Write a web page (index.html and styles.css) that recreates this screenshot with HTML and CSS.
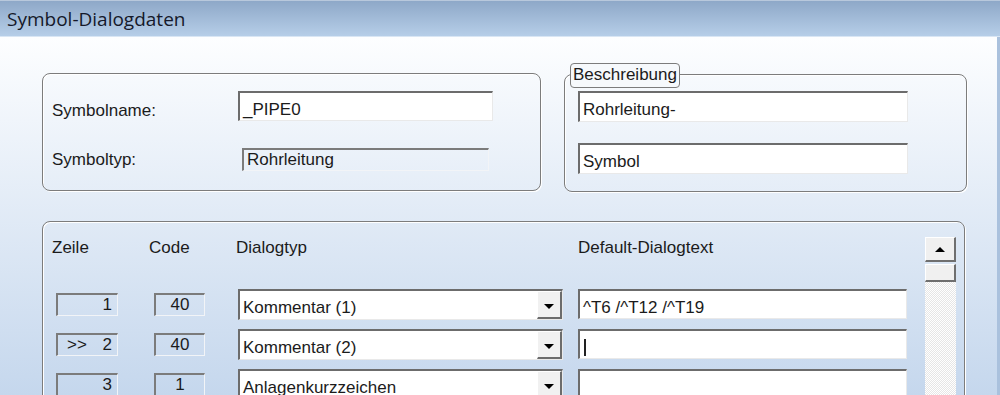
FILE: index.html
```html
<!DOCTYPE html>
<html lang="de">

<head>
    <meta charset="UTF-8">
    <title>Symbol-Dialogdaten</title>
    <link rel="stylesheet" href="styles.css">
</head>

<body>
    <div class="window">
        <div class="titlebar">Symbol-Dialogdaten</div>

        <div class="client">
            <div class="top-row">
                <div class="group group-symbol">
                    <div class="field-row">
                        <span class="label label-name">Symbolname:</span>
                        <div class="edit edit-name">_PIPE0</div>
                    </div>
                    <div class="field-row">
                        <span class="label">Symboltyp:</span>
                        <div class="static static-type">Rohrleitung</div>
                    </div>
                </div>

                <div class="group group-desc">
                    <span class="legend">Beschreibung</span>
                    <div class="edit edit-desc">Rohrleitung-</div>
                    <div class="edit edit-desc">Symbol</div>
                </div>
            </div>

            <div class="group group-lines">
                <div class="lines">
                    <div class="head">Zeile</div>
                    <div class="head">Code</div>
                    <div class="head">Dialogtyp</div>
                    <div class="head">Default-Dialogtext</div>

                    <div class="cell"><div class="static num-line">1</div></div>
                    <div class="cell"><div class="static num-code">40</div></div>
                    <div class="cell">
                        <div class="combo">
                            <span class="combo-text">Kommentar (1)</span>
                            <span class="combo-btn"><span class="arrow-down"></span></span>
                        </div>
                    </div>
                    <div class="cell"><div class="edit edit-text">^T6 /^T12 /^T19</div></div>

                    <div class="cell"><div class="static num-line"><span>&gt;&gt;</span>2</div></div>
                    <div class="cell"><div class="static num-code">40</div></div>
                    <div class="cell">
                        <div class="combo">
                            <span class="combo-text">Kommentar (2)</span>
                            <span class="combo-btn"><span class="arrow-down"></span></span>
                        </div>
                    </div>
                    <div class="cell"><div class="edit edit-text"><span class="caret"></span></div></div>

                    <div class="cell"><div class="static num-line">3</div></div>
                    <div class="cell"><div class="static num-code">1</div></div>
                    <div class="cell">
                        <div class="combo">
                            <span class="combo-text">Anlagenkurzzeichen</span>
                            <span class="combo-btn"><span class="arrow-down"></span></span>
                        </div>
                    </div>
                    <div class="cell"><div class="edit edit-text"></div></div>
                </div>

                <div class="scrollbar">
                    <div class="sb-btn"><span class="arrow-up"></span></div>
                    <div class="sb-thumb"></div>
                    <div class="sb-track"></div>
                </div>
            </div>
        </div>
    </div>
</body>

</html>
```

FILE: styles.css
```css
body {
    margin: 0;
    font-family: "Liberation Sans", Arial, sans-serif;
    font-size: 17px;
    color: #1b1b1b;
}

.window {
    width: 1000px;
    height: 395px;
    display: flex;
    flex-direction: column;
    overflow: hidden;
}

.titlebar {
    height: 37px;
    box-sizing: border-box;
    padding-left: 7px;
    line-height: 36px;
    font-family: "Open Sans", "Noto Sans", sans-serif;
    font-size: 19px;
    color: #15192a;
    background: linear-gradient(#8ea8c8, #b6cee8);
    border-top: 1px solid #b8c8dc;
    border-bottom: 1px solid #d9e6f4;
}

.client {
    flex: 1;
    overflow: hidden;
    padding: 36px 0 0 42px;
    background: linear-gradient(#fdfeff, #c5d7ed);
    border-right: 3px solid #aac1dd;
}

.top-row {
    display: flex;
    align-items: flex-start;
    gap: 23px;
}

.group {
    box-sizing: border-box;
    border: 1px solid #7c7c7c;
    border-radius: 8px;
    box-shadow: inset 1px 1px 0 #fff, 1px 1px 0 #fff;
}

/* Symbol name / type */
.group-symbol {
    width: 499px;
    height: 118px;
    padding: 17px 0 0 9px;
}

.field-row {
    display: flex;
    align-items: center;
}

.field-row + .field-row {
    margin-top: 27px;
}

.label {
    width: 186px;
    flex: none;
}

.label-name {
    padding-top: 10px;
}

.edit {
    box-sizing: border-box;
    height: 31px;
    padding: 7px 3px 0;
    line-height: 19px;
    background: #fff;
    border-top: 2px solid #6c6c6c;
    border-left: 2px solid #6c6c6c;
    border-right: 1px solid #e9e9e9;
    border-bottom: 1px solid #e9e9e9;
    white-space: nowrap;
}

.edit-name {
    width: 255px;
    height: 30px;
}

.static {
    box-sizing: border-box;
    height: 23px;
    line-height: 20px;
    padding: 0 3px;
    border-top: 2px solid #7b7b7b;
    border-left: 2px solid #7b7b7b;
    border-right: 1px solid #f2f4f7;
    border-bottom: 1px solid #f2f4f7;
}

.static-type {
    width: 247px;
    margin-left: 4px;
}

/* Beschreibung */
.group-desc {
    position: relative;
    width: 403px;
    height: 118px;
    margin-top: 1px;
    padding: 16px 0 0 13px;
}

.legend {
    position: absolute;
    top: -12px;
    left: 5px;
    height: 25px;
    box-sizing: border-box;
    padding: 0 2px;
    line-height: 22px;
    border: 1px solid #7c7c7c;
    border-radius: 4px;
    background: #f6f9fc;
}

.edit-desc {
    width: 330px;
}

.edit-desc + .edit-desc {
    margin-top: 21px;
}

/* Dialog lines */
.group-lines {
    width: 923px;
    height: 220px;
    margin-top: 29px;
    display: flex;
    padding: 12px 8px 0 9px;
}

.lines {
    display: grid;
    grid-template-columns: 97px 87px 342px 329px;
    grid-template-rows: 46px repeat(3, 31px);
    row-gap: 9px;
    align-content: start;
}

.head {
    line-height: 28px;
}

.cell {
    height: 31px;
}

.num-line {
    width: 62px;
    margin: 4px 0 0 4px;
    display: flex;
    justify-content: space-between;
    padding: 0 5px 0 9px;
}

.num-line:not(:has(span)) {
    justify-content: flex-end;
}

.num-code {
    width: 51px;
    margin: 4px 0 0 5px;
    text-align: center;
}

.combo {
    box-sizing: border-box;
    width: 325px;
    height: 31px;
    margin-left: 2px;
    display: flex;
    background: #fff;
    border-top: 2px solid #6c6c6c;
    border-left: 2px solid #6c6c6c;
    border-right: 1px solid #e9e9e9;
    border-bottom: 1px solid #e9e9e9;
}

.combo-text {
    flex: 1;
    padding: 7px 3px 0;
    line-height: 19px;
    white-space: nowrap;
}

.combo-btn {
    width: 25px;
    box-sizing: border-box;
    display: flex;
    align-items: center;
    justify-content: center;
    padding-top: 3px;
    background: #f1f1f1;
    border-top: 1px solid #fff;
    border-left: 1px solid #fff;
    border-right: 2px solid #6c6c6c;
    border-bottom: 2px solid #6c6c6c;
}

.arrow-down {
    width: 0;
    height: 0;
    border-left: 5px solid transparent;
    border-right: 5px solid transparent;
    border-top: 5px solid #000;
}

.edit-text {
    width: 329px;
    height: 30px;
}

.caret {
    display: inline-block;
    width: 2px;
    height: 17px;
    margin-left: 1px;
    background: #222;
    vertical-align: -3px;
}

/* Scrollbar */
.scrollbar {
    width: 31px;
    margin: 3px 0 0 auto;
    display: flex;
    flex-direction: column;
}

.sb-btn,
.sb-thumb {
    box-sizing: border-box;
    background: #f0f0f0;
    border-top: 1px solid #fff;
    border-left: 1px solid #fff;
    border-right: 2px solid #6f6f6f;
    border-bottom: 2px solid #6f6f6f;
}

.sb-btn {
    height: 25px;
    display: flex;
    align-items: center;
    justify-content: center;
}

.sb-thumb {
    height: 18px;
    margin-top: 2px;
}

.arrow-up {
    width: 0;
    height: 0;
    border-left: 5px solid transparent;
    border-right: 5px solid transparent;
    border-bottom: 5px solid #000;
}

.sb-track {
    flex: 1;
    background: repeating-conic-gradient(#ffffff 0 25%, #e6e6e6 0 50%) 0 0 / 2px 2px;
}
```
